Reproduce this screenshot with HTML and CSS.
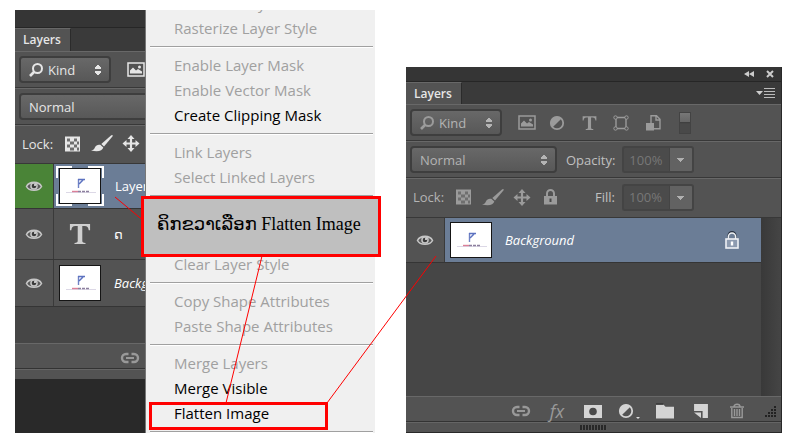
FILE: index.html
```html
<!DOCTYPE html>
<html lang="lo">
<head>
<meta charset="utf-8">
<title>Flatten Image</title>
<link rel="stylesheet" href="styles.css">
</head>
<body>
<svg class="sprite" aria-hidden="true">
  <symbol id="search" viewBox="0 0 16 16"><circle cx="9.5" cy="6.500" r="4.500" fill="none" stroke="currentColor" stroke-width="2"/><path d="M6.5 9.500 2 14" stroke="currentColor" stroke-width="2.600"/></symbol>
  <symbol id="picture" viewBox="0 0 18 16"><rect x="1" y="1.500" width="16" height="13" fill="none" stroke="currentColor" stroke-width="1.500"/><path d="M3 12V9l3-3 3 3 2-1.500 4 2.500v2z" fill="currentColor"/><circle cx="12.500" cy="5.500" r="1.500" fill="currentColor"/></symbol>
  <symbol id="adjust" viewBox="0 0 16 16"><circle cx="8" cy="8" r="6.200" fill="none" stroke="currentColor" stroke-width="1.800"/><path d="M3.400 12.600A6.500 6.500 0 0 1 12.600 3.400z" fill="currentColor"/></symbol>
  <symbol id="type" viewBox="0 0 24 24"><path d="M1 1h22v7h-1.500C21 4.500 20 3.200 17 3.200h-2.500V19c0 2 .8 2.500 3.500 2.700V23H6v-1.300C8.700 21.500 9.500 21 9.500 19V3.200H7C4 3.200 3 4.500 2.500 8H1z" fill="currentColor"/></symbol>
  <symbol id="shape" viewBox="0 0 16 16"><g fill="none" stroke="currentColor"><path d="M4 2.500h8M4 13.500h8M3 4v8M13 4v8" stroke-width="1.400"/><circle cx="2.500" cy="2.500" r="1.700"/><circle cx="13.500" cy="2.500" r="1.700"/><circle cx="2.500" cy="13.500" r="1.700"/><circle cx="13.500" cy="13.500" r="1.700"/></g></symbol>
  <symbol id="smart" viewBox="0 0 16 16"><path d="M6 8V.8h5.500l3.500 3.500v9.500H9M11 1v4h4" fill="none" stroke="currentColor" stroke-width="1.400"/><rect x="1" y="8" width="8" height="7.500" fill="currentColor"/></symbol>
  <symbol id="checker" viewBox="0 0 15 15"><path d="M0 0h15v15H0z" fill="currentColor"/><path d="M2 2h3v3H2zM9 2h3v3H9zM5 5h4v3H5zM12 5h2v3h-2zM2 8h3v3H2zM9 8h3v3H9zM5 11h4v3H5zM12 11h2v3h-2z" fill="#6f6f6f"/></symbol>
  <symbol id="brush" viewBox="0 0 22 17"><path d="M21 0c1 0 .8 1 .4 1.600L13 11.500 10.300 9 20 .6z" fill="currentColor"/><path d="M9.300 9.800l3 2.800C11.500 16 7 17 0 15.600c3-.6 3.400-2 4-3.400.9-2 3-3 5.300-2.400z" fill="currentColor"/></symbol>
  <symbol id="move" viewBox="0 0 17 17"><path d="M8.500 0l3.500 4H9.600v3.400H13V5l4 3.500-4 3.500V9.600H9.600V13H12l-3.500 4L5 13h2.400V9.600H4V12L0 8.500 4 5v2.400h3.400V4H5z" fill="currentColor"/></symbol>
  <symbol id="lock" viewBox="0 0 14 16"><path d="M3.500 7V4.500a3.500 3.500 0 0 1 7 0V7" fill="none" stroke="currentColor" stroke-width="2"/><path d="M.5 7h13v8.500H.5z" fill="currentColor"/><path d="M6 9.500h2v3.500H6z" fill="#484848"/></symbol>
  <symbol id="layerlock" viewBox="0 0 14 18"><path d="M3.500 7V4.500a3.500 3.500 0 0 1 7 0V7" fill="none" stroke="#26303f" stroke-width="2"/><path d="M3.500 8V5.500a3.500 3.500 0 0 1 7 0V8" fill="none" stroke="#eef1f5" stroke-width="1.600"/><rect x="1" y="8" width="12" height="9" fill="#8d9bb0" stroke="#eef1f5" stroke-width="1.600"/><path d="M5.800 10.500h2.400v4H5.800z" fill="#fff"/></symbol>
  <symbol id="eye" viewBox="0 0 18 14"><path d="M1.500 7.500C4 2 14 2 16.500 7.500 14 12.500 4 12.500 1.500 7.500z" fill="#5a5a5a" stroke="#c6c6c6" stroke-width="1.600"/><circle cx="9" cy="7" r="3.800" fill="#c6c6c6"/><circle cx="9" cy="7" r="2.300" fill="#3a3a3a"/><circle cx="10" cy="6" r="1" fill="#eee"/></symbol>
  <symbol id="chain" viewBox="0 0 20 12"><path d="M8.500 2H6a4 4 0 0 0 0 8h2.500M11.500 2H14a4 4 0 0 1 0 8h-2.500" fill="none" stroke="currentColor" stroke-width="2.400"/><path d="M6 6h8" stroke="currentColor" stroke-width="2"/></symbol>
  <symbol id="mask" viewBox="0 0 18 15"><path d="M0 1h18v13H0z" fill="currentColor"/><circle cx="9" cy="7.500" r="3.800" fill="#4a4a4a"/></symbol>
  <symbol id="folder" viewBox="0 0 17 15"><path d="M0 1h7l2 2h8v11H0z" fill="currentColor"/><path d="M0 .5h7" stroke="#222"/></symbol>
  <symbol id="new" viewBox="0 0 15 15"><path d="M1 1h13v13H9V7.500H1z" fill="currentColor"/><path d="M1 9h6.500v5z" fill="currentColor"/></symbol>
  <symbol id="trash" viewBox="0 0 16 16"><g fill="none" stroke="currentColor" stroke-width="1.400"><path d="M1 4h14M5 3.500c0-3 6-3 6 0M2.800 5v9.500h10.400V5M5.500 6v7M8 6v7M10.500 6v7"/></g></symbol>
  <symbol id="thumb" viewBox="0 0 40 34"><path d="M0 0h40v34H0z" fill="#fff"/><path d="M18.500 10v9" stroke="#6f82c4" stroke-width="1.400"/><path d="M18 10.500h7M19 15l4-4" stroke="#5c72c0" stroke-width="1.500"/><path d="M6 23.500h30" stroke="#dcd8e6"/><path d="M12 22.500h6" stroke="#dc8098" stroke-width="1.400"/><path d="M18 22.500h11" stroke="#8d7f9e" stroke-width="1.400" stroke-dasharray="3 1"/></symbol>
  <symbol id="grip" viewBox="0 0 12 12"><g stroke="#222" stroke-width="2" stroke-dasharray="2 1"><path d="M11 12V0M8 12V3M5 12V6M2 12V9"/></g></symbol>
</svg>

<main class="page">
  <section class="shot">
    <div class="workspace">
      <div class="panel active">
        <div class="titlebar"></div>
        <div class="tabs"><span class="tab">Layers</span></div>
        <div class="row filter">
          <label class="select kind"><svg class="i16"><use href="#search"/></svg><select aria-label="Filter"><option>Kind</option></select><span class="updown"></span></label>
          <div class="filters"><button aria-label="Pixel layers"><svg class="i18"><use href="#picture"/></svg></button></div>
        </div>
        <div class="row"><label class="select mode"><select aria-label="Blend mode"><option>Normal</option></select></label></div>
        <div class="row locks">
          <span class="caption">Lock:</span>
          <button aria-label="Lock transparency"><svg class="i15"><use href="#checker"/></svg></button>
          <button aria-label="Lock pixels"><svg class="brush"><use href="#brush"/></svg></button>
          <button aria-label="Lock position"><svg class="i18"><use href="#move"/></svg></button>
        </div>
        <ul class="layers">
          <li class="layer selected"><button class="eye green" aria-label="Visibility"><svg><use href="#eye"/></svg></button><span class="frame"><svg class="thumb"><use href="#thumb"/></svg></span><span class="name">Layer</span></li>
          <li class="layer text-layer"><button class="eye" aria-label="Visibility"><svg><use href="#eye"/></svg></button><svg class="big-type"><use href="#type"/></svg><span class="name">ດ</span></li>
          <li class="layer"><button class="eye" aria-label="Visibility"><svg><use href="#eye"/></svg></button><svg class="thumb"><use href="#thumb"/></svg><em class="name">Background</em></li>
        </ul>
        <div class="footer"><button class="dim" aria-label="Link layers"><svg class="i20"><use href="#chain"/></svg></button></div>
        <div class="strip"></div>
      </div>
    </div>
    <div class="menu">
      <button disabled>Rasterize Layer</button>
      <button disabled>Rasterize Layer Style</button>
      <hr>
      <button disabled>Enable Layer Mask</button>
      <button disabled>Enable Vector Mask</button>
      <button>Create Clipping Mask</button>
      <hr>
      <button disabled>Link Layers</button>
      <button disabled>Select Linked Layers</button>
      <hr>
      <div class="style-group"><button disabled>Clear Layer Style</button></div>
      <hr>
      <button disabled>Copy Shape Attributes</button>
      <button disabled>Paste Shape Attributes</button>
      <hr>
      <button disabled>Merge Layers</button>
      <button>Merge Visible</button>
      <button>Flatten Image</button>
      <hr>
    </div>
  </section>

  <section class="panel result">
    <div class="titlebar">
      <button aria-label="Collapse"><svg class="collapse" viewBox="0 0 10 6"><path d="M5 0v6L0 3zM10 0v6L5 3z" fill="#ccc"/></svg></button>
      <button aria-label="Close"><svg class="close" viewBox="0 0 8 8"><path d="M1 1l6 6M7 1 1 7" stroke="#ccc" stroke-width="2"/></svg></button>
    </div>
    <div class="tabs"><span class="tab">Layers</span><button class="panel-menu" aria-label="Panel menu"><svg viewBox="0 0 20 12"><path d="M0 4h7L3.500 8z" fill="#ccc"/><path d="M8 1.500h11M8 4.500h11M8 7.500h11M8 10.500h11" stroke="#bbb"/></svg></button></div>
    <div class="row filter">
      <label class="select kind"><svg class="i16"><use href="#search"/></svg><select aria-label="Filter" disabled><option>Kind</option></select><span class="updown"></span></label>
      <div class="filters">
        <button aria-label="Pixel layers"><svg class="i18"><use href="#picture"/></svg></button>
        <button aria-label="Adjustment layers"><svg class="i16"><use href="#adjust"/></svg></button>
        <button aria-label="Type layers"><svg class="i15"><use href="#type"/></svg></button>
        <button aria-label="Shape layers"><svg class="i16"><use href="#shape"/></svg></button>
        <button aria-label="Smart objects"><svg class="i16"><use href="#smart"/></svg></button>
        <button class="switch" aria-label="Toggle filter"></button>
      </div>
    </div>
    <div class="row">
      <div class="lead"><label class="select mode"><select aria-label="Blend mode" disabled><option>Normal</option></select><span class="updown"></span></label></div>
      <div class="amount"><label for="opacity">Opacity:</label><input id="opacity" value="100%" disabled><button aria-label="Opacity slider"></button></div>
    </div>
    <div class="row locks">
      <div class="lead">
        <span class="caption">Lock:</span>
        <button aria-label="Lock transparency"><svg class="i15"><use href="#checker"/></svg></button>
        <button aria-label="Lock pixels"><svg class="brush"><use href="#brush"/></svg></button>
        <button aria-label="Lock position"><svg class="i18"><use href="#move"/></svg></button>
        <button aria-label="Lock all"><svg class="i15"><use href="#lock"/></svg></button>
      </div>
      <div class="amount"><label for="fill">Fill:</label><input id="fill" value="100%" disabled><button aria-label="Fill slider"></button></div>
    </div>
    <div class="list">
      <ul class="layers">
        <li class="layer selected"><button class="eye" aria-label="Visibility"><svg><use href="#eye"/></svg></button><svg class="thumb"><use href="#thumb"/></svg><em class="name">Background</em><svg class="layer-lock"><use href="#layerlock"/></svg></li>
      </ul>
      <div class="scroll"></div>
    </div>
    <div class="footer">
      <button class="dim" aria-label="Link layers"><svg class="i20"><use href="#chain"/></svg></button>
      <button class="dim fx">fx</button>
      <button aria-label="Add mask"><svg class="i18"><use href="#mask"/></svg></button>
      <button class="has-menu" aria-label="New adjustment"><svg class="i16"><use href="#adjust"/></svg></button>
      <button aria-label="New group"><svg class="i18"><use href="#folder"/></svg></button>
      <button aria-label="New layer"><svg class="i16"><use href="#new"/></svg></button>
      <button class="dim" aria-label="Delete"><svg class="i16"><use href="#trash"/></svg></button>
      <svg class="grip"><use href="#grip"/></svg>
    </div>
    <div class="strip"><span class="handle"></span></div>
  </section>

  <div class="highlight"></div>
  <svg class="lines" viewBox="0 0 789 444" aria-hidden="true"><path d="M115 197 145 222M262 256 226 403M327 403 436 256"/></svg>
  <p class="callout">ຄິກຂວາເລືອກ Flatten Image</p>
</main>
</body>
</html>
```
FILE: styles.css
```css
* { box-sizing: border-box; }
body {
  margin: 0;
  background: #fff;
  font: 13px/16px "Open Sans", "DejaVu Sans", sans-serif;
  color: #e6e6e6;
}
button, select, input { font: inherit; color: inherit; margin: 0; padding: 0; border: 0; background: none; opacity: 1; }
select:disabled { opacity: 1; }
.sprite { position: absolute; width: 0; height: 0; }
.page {
  position: relative;
  display: grid;
  grid-template-columns: minmax(0, 360fr) minmax(0, 376fr);
  gap: 31px;
  padding: 10px 7px 11px 15px;
}
.shot { display: flex; min-width: 0; }
.workspace { flex: 1; min-width: 0; overflow: hidden; background: #292929; border-right: 1px solid #777; }

/* Panel chrome */
.panel { display: flex; flex-direction: column; background: #535353; }
.titlebar { height: 18px; background: #353535; border-bottom: 1px solid #262626; display: flex; justify-content: flex-end; align-items: center; gap: 12px; padding-right: 7px; }
.titlebar button, .panel-menu { display: flex; }
.collapse { width: 10px; height: 6px; }
.close { width: 8px; height: 8px; }
.tabs { display: flex; justify-content: space-between; align-items: center; height: 23px; background: #3a3a3a; padding-right: 5px; }
.tab { align-self: stretch; width: 56px; padding-left: 8px; line-height: 21px; font-size: 12px; font-weight: 600; background: #535353; border-top: 1px solid #686868; border-right: 1px solid #2b2b2b; }
.panel-menu svg { width: 20px; height: 12px; }
.row { display: flex; align-items: center; height: 37px; padding-left: 4px; border-top: 1px solid #686868; border-bottom: 1px solid #383838; overflow: hidden; }
.row.locks { height: 39px; padding: 0 0 2px; }
.row.filter { gap: 11px; }
.select { position: relative; display: flex; flex: none; align-items: center; width: 92px; height: 27px; padding: 0 7px; border: 2px solid #3e3e3e; border-radius: 4px; background: linear-gradient(#686868, #585858); }
.select.mode { width: 147px; padding-left: 8px; }
.select select { flex: 1; min-width: 0; appearance: none; }
.kind select { padding-left: 4px; }
.updown { width: 8px; height: 12px; background:
  conic-gradient(from 143deg at 50% 0, currentColor 74deg, transparent 0) top / 8px 5px no-repeat,
  conic-gradient(from -37deg at 50% 100%, currentColor 74deg, transparent 0) bottom / 8px 5px no-repeat; }
.filters { display: flex; align-items: center; }
.filters button { display: flex; justify-content: center; align-items: center; flex: none; width: 32px; height: 24px; padding-right: 4px; }
.filters .i18 { margin-left: 2px; }
.filters button:first-child { width: 30px; }
.i15 { width: 15px; height: 16px; }
.i16 { width: 16px; height: 16px; }
.i18 { width: 18px; height: 17px; flex: none; }
.i20 { width: 20px; height: 12px; }
.brush { width: 22px; height: 17px; }
.caption { flex: none; width: 43px; padding-left: 7px; }
.locks button { display: flex; justify-content: center; align-items: center; flex: none; width: 29px; height: 24px; }

/* Layer rows */
.layers { list-style: none; margin: 0; padding: 0; }
.layer { display: flex; align-items: center; height: 47px; border-bottom: 1px solid #353535; overflow: hidden; }
.layer.selected { background: #6b7d96; height: 45px; }
.text-layer { height: 51px; }
.eye { display: flex; flex: none; align-self: stretch; align-items: center; justify-content: center; width: 39px; background: #535353; border-right: 1px solid #3a3a3a; }
.eye svg { width: 18px; height: 14px; }
.eye.green { background: #4a8437; }
.thumb { display: block; flex: none; width: 42px; height: 36px; margin-left: 5px; border: 1px solid #151515; background: #fff; }
.frame { flex: none; display: flex; margin-left: 2px; padding: 2px 3px; background:
  linear-gradient(#fff, #fff) 0 0 / 16px 2px, linear-gradient(#fff, #fff) 100% 0 / 16px 2px,
  linear-gradient(#fff, #fff) 0 100% / 16px 2px, linear-gradient(#fff, #fff) 100% 100% / 16px 2px,
  linear-gradient(#fff, #fff) 0 0 / 2px 12px, linear-gradient(#fff, #fff) 100% 0 / 2px 12px,
  linear-gradient(#fff, #fff) 0 100% / 2px 12px, linear-gradient(#fff, #fff) 100% 100% / 2px 12px;
  background-repeat: no-repeat; }
.frame .thumb { margin: 0; }
.frame + .name { margin-left: 11px; }
.big-type { flex: none; width: 22px; height: 22px; margin: 0 10px 0 15px; color: #cfcfcf; }
.name { flex: 1; min-width: 0; margin-left: 13px; overflow: hidden; white-space: nowrap; color: #fff; }

.footer { display: flex; align-items: center; height: 26px; padding: 4px 0 0 97px; border-top: 1px solid #686868; border-bottom: 1px solid #333; color: #d4d4d4; }
.footer button { display: flex; align-items: center; justify-content: center; flex: none; width: 36px; height: 20px; }
.footer .dim { color: #999; }
.active .layers { background: #535353; border-bottom: 36px solid #464646; }
.strip { height: 10px; border-top: 1px solid #656565; }

/* Result panel */
.result { margin-top: 57px; border-right: 1px solid #292929; border-bottom: 1px solid #292929; color: #b4b4b4; }
.result .titlebar { height: 15px; }
.result .tabs { height: 22px; }
.result .tab { color: #e6e6e6; }
.result .locks { height: 40px; }
.result .filters button, .result .locks button, .result .select svg { color: #9b9b9b; }
.lead { display: flex; align-items: center; flex: none; width: 156px; }
.locks .lead { width: 160px; }
.amount { display: flex; align-items: center; justify-content: flex-end; width: 128px; }
.amount label { margin-right: 7px; color: #c0c0c0; }
.amount input { width: 47px; height: 27px; padding-left: 5px; border: 2px solid #444; border-right: 0; border-radius: 3px 0 0 3px; background: #4b4b4b; color: #777; }
.amount button, .locks .amount button { display: block; width: 25px; height: 27px; border: 2px solid #444; border-left-width: 1px; border-radius: 0 3px 3px 0; background:
  linear-gradient(to bottom left, #b0b0b0 50%, transparent 50%) 7px 10px / 4px 4px no-repeat,
  linear-gradient(to bottom right, #b0b0b0 50%, transparent 50%) 11px 10px / 4px 4px no-repeat, #626262; }
.filters .switch { width: 12px; height: 22px; margin-left: 8px; border: 1px solid #434343; background: linear-gradient(#777 0, #666 45%, #3d3d3d 45%, #494949 55%); }
.list { display: flex; flex: 1; background: #464646; }
.list .layers { flex: 1; }
.scroll { width: 20px; background: linear-gradient(90deg, #393939, #454545); }
.layer-lock { flex: none; width: 14px; height: 18px; margin-right: 22px; }
.result .footer { padding-right: 5px; }
.footer .fx { font: italic 18px/20px "Open Sans", sans-serif; }
.footer .has-menu::after { content: ""; align-self: flex-end; border: 2px solid transparent; border-top-color: #ddd; margin-left: 2px; }
.grip { width: 12px; height: 12px; margin-left: auto; }
.result .strip { display: flex; align-items: center; justify-content: center; }
.handle { width: 27px; height: 5px; background: repeating-linear-gradient(90deg, #282828 0 2px, #555 2px 3px); }

/* Context menu */
.menu { flex: none; width: 229px; overflow: hidden; background: #f0f0f0; }
.menu button { display: block; width: 100%; height: 25px; padding: 0 0 0 28px; text-align: left; font-size: 15px; line-height: 23px; color: #000; }
.menu button:disabled { color: #a0a0a0; }
.menu > button:first-child { margin-top: -19px; }
.menu hr { margin: 5px 2px 5px 4px; border: 0; border-top: 1px solid #a0a0a0; border-bottom: 1px solid #fff; }
.menu hr:last-child { margin-bottom: 0; }
.style-group { padding-top: 50px; }

/* Annotations over the two captures */
.highlight { position: absolute; left: 149px; top: 402px; width: 179px; height: 28px; border: 3px solid #f00; }
.lines { position: absolute; left: 0; top: 0; width: 789px; height: 444px; pointer-events: none; }
.lines path { fill: none; stroke: #f00; stroke-width: 1; }
.callout { position: absolute; left: 141px; top: 196px; width: 240px; height: 61px; margin: 0; padding-left: 13px; border: 3px solid #f00; background: #bfbfbf; color: #000; font: 18px/51px "Liberation Serif", "DejaVu Sans", serif; white-space: nowrap; }
```
